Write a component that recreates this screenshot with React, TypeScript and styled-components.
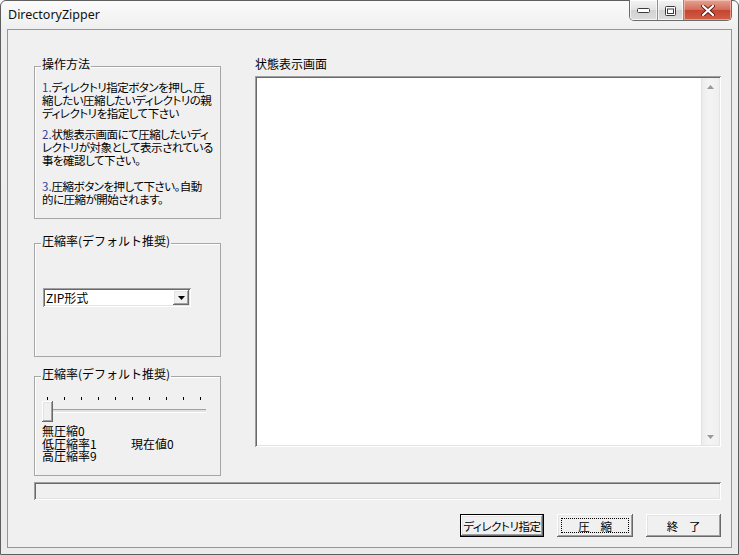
import React from 'react';
import styled, { createGlobalStyle, css } from 'styled-components';

const GlobalStyle = createGlobalStyle`
  html, body {
    margin: 0;
    padding: 0;
    background: #ffffff;
  }
  body {
    width: 739px;
    height: 555px;
    overflow: hidden;
  }
`;

const uiFont = `"Noto Sans CJK JP", "Noto Sans", sans-serif`;

const raised = css`
  background: #f0f0f0;
  box-shadow: inset -1px -1px #696969, inset 1px 1px #ffffff, inset -2px -2px #a0a0a0,
    inset 2px 2px #e3e3e3;
`;

const sunken = css`
  box-shadow: inset 1px 1px #a0a0a0, inset -1px -1px #ffffff, inset 2px 2px #696969,
    inset -2px -2px #e3e3e3;
`;

const steps = [
  {
    no: '1.',
    lines: ['ディレクトリ指定ボタンを押し、圧', '縮したい圧縮したいディレクトリの親', 'ディレクトリを指定して下さい'],
    gap: 0,
  },
  {
    no: '2.',
    lines: ['状態表示画面にて圧縮したいディ', 'レクトリが対象として表示されている', '事を確認して下さい。'],
    gap: 8,
  },
  {
    no: '3.',
    lines: ['圧縮ボタンを押して下さい。自動', '的に圧縮が開始されます。'],
    gap: 13,
  },
];

const ticks = Array.from({ length: 10 }, (_, i) => i);

const App: React.FC = () => {
  return (
    <>
      <GlobalStyle />
      <Window>
        <TitleBar>
          <Title>DirectoryZipper</Title>
          <Caption>
            <CapButton $w={28}>
              <svg width="14" height="6" viewBox="0 0 14 6">
                <rect x="0.5" y="0.5" width="12" height="4" rx="1" fill="#fff" stroke="#3c3c3c" />
              </svg>
            </CapButton>
            <CapButton $w={26}>
              <svg width="11" height="10" viewBox="0 0 11 10">
                <rect x="0.5" y="0.5" width="10" height="9" rx="1" fill="#fff" stroke="#3c3c3c" />
                <rect x="2.5" y="3" width="6" height="4.5" fill="none" stroke="#3c3c3c" />
              </svg>
            </CapButton>
            <CloseButton>
              <svg width="14" height="11" viewBox="0 0 14 11">
                <path
                  d="M2 1 L12 10 M12 1 L2 10"
                  stroke="#5a1f19"
                  strokeWidth="4"
                  strokeLinecap="round"
                />
                <path
                  d="M2 1 L12 10 M12 1 L2 10"
                  stroke="#ffffff"
                  strokeWidth="2.2"
                  strokeLinecap="round"
                />
              </svg>
            </CloseButton>
          </Caption>
        </TitleBar>
        <Client>
          <Main>
            <LeftColumn>
              <Group $h={153}>
                <Legend>操作方法</Legend>
                <Steps>
                  {steps.map(step => (
                    <Step key={step.no} $gap={step.gap}>
                      {step.lines.map((line, i) => (
                        <Line key={line}>
                          {i === 0 && <Num>{step.no}</Num>}
                          {line}
                        </Line>
                      ))}
                    </Step>
                  ))}
                </Steps>
              </Group>
              <Group $h={114} $gap={24}>
                <Legend>圧縮率(デフォルト推奨)</Legend>
                <ComboArea>
                  <Combo>
                    <ComboText>ZIP形式</ComboText>
                    <DropButton>
                      <svg width="7" height="4" viewBox="0 0 7 4">
                        <path d="M0 0 H7 L3.5 4 Z" fill="#000" />
                      </svg>
                    </DropButton>
                  </Combo>
                </ComboArea>
              </Group>
              <Group $h={100} $gap={19}>
                <Legend>圧縮率(デフォルト推奨)</Legend>
                <Slider>
                  <Ticks>
                    {ticks.map(t => (
                      <Tick key={t} />
                    ))}
                  </Ticks>
                  <Channel />
                  <Thumb />
                </Slider>
                <Values>
                  <ValueRow>
                    <ValueLabel>無圧縮0</ValueLabel>
                  </ValueRow>
                  <ValueRow>
                    <ValueLabel $w={89}>低圧縮率1</ValueLabel>
                    <ValueLabel>現在値0</ValueLabel>
                  </ValueRow>
                  <ValueRow>
                    <ValueLabel>高圧縮率9</ValueLabel>
                  </ValueRow>
                </Values>
              </Group>
            </LeftColumn>
            <RightColumn>
              <FieldLabel>状態表示画面</FieldLabel>
              <StatusBox>
                <StatusArea />
                <ScrollBar>
                  <ScrollArrow>
                    <svg width="7" height="4" viewBox="0 0 7 4">
                      <path d="M3.5 0 L7 4 H0 Z" fill="#9a9a9a" />
                    </svg>
                  </ScrollArrow>
                  <ScrollArrow>
                    <svg width="7" height="4" viewBox="0 0 7 4">
                      <path d="M0 0 H7 L3.5 4 Z" fill="#9a9a9a" />
                    </svg>
                  </ScrollArrow>
                </ScrollBar>
              </StatusBox>
            </RightColumn>
          </Main>
          <Progress />
          <ButtonRow>
            <PushButton $w={84} $default>
              ディレクトリ指定
            </PushButton>
            <PushButton $w={76}>
              <Focus>圧　縮</Focus>
            </PushButton>
            <PushButton $w={75}>終　了</PushButton>
          </ButtonRow>
        </Client>
      </Window>
    </>
  );
};

export default App;

const Window = styled.div`
  width: 739px;
  height: 555px;
  box-sizing: border-box;
  border: 1px solid #5e5e5e;
  border-radius: 6px 6px 0 0;
  background: linear-gradient(#fbfbfb, #eeeeee 30px, #ebebeb);
  display: flex;
  flex-direction: column;
  font-family: ${uiFont};
  color: #000;
`;

const TitleBar = styled.div`
  height: 28px;
  display: flex;
  justify-content: space-between;
  align-items: flex-start;
  padding-left: 7px;
`;

const Title = styled.div`
  margin-top: 6px;
  font-family: 'Noto Sans', sans-serif;
  font-size: 12.5px;
  line-height: 16px;
  color: #111;
`;

const Caption = styled.div`
  display: flex;
  margin-top: -1px;
  margin-right: 6px;
  height: 20px;
  border: 1px solid #6a6a6a;
  border-top: none;
  border-radius: 0 0 5px 5px;
  overflow: hidden;
`;

const CapButton = styled.div<{ $w: number }>`
  width: ${p => p.$w}px;
  height: 100%;
  display: flex;
  align-items: center;
  justify-content: center;
  padding-top: 2px;
  box-sizing: border-box;
  background: linear-gradient(#f4f4f4, #e2e2e2 50%, #d2d2d2 51%, #dcdcdc);
  border-right: 1px solid #8c8c8c;
  box-shadow: inset 0 0 0 1px rgba(255, 255, 255, 0.7);
`;

const CloseButton = styled.div`
  width: 47px;
  height: 100%;
  display: flex;
  align-items: center;
  justify-content: center;
  background: linear-gradient(#e4a393, #d46a58 50%, #c54530 51%, #d35e45);
  box-shadow: inset 0 0 0 1px rgba(255, 220, 210, 0.5);
`;

const Client = styled.div`
  flex: 1;
  margin: 0 6px 6px;
  border: 1px solid #969696;
  background: #f0f0f0;
  padding: 27px 10px 0 26px;
  display: flex;
  flex-direction: column;
`;

const Main = styled.div`
  display: grid;
  grid-template-columns: 187px 1fr;
  column-gap: 34px;
  align-items: start;
`;

const LeftColumn = styled.div`
  display: flex;
  flex-direction: column;
  padding-top: 9px;
`;

const Group = styled.div<{ $h: number; $gap?: number }>`
  position: relative;
  box-sizing: border-box;
  height: ${p => p.$h}px;
  margin-top: ${p => p.$gap ?? 0}px;
  border: 1px solid #a6a6a6;
  box-shadow: inset 1px 1px #ffffff;
`;

const Legend = styled.div`
  position: absolute;
  top: -10px;
  left: 6px;
  padding: 0 1px;
  background: #f0f0f0;
  font-size: 12px;
  line-height: 14px;
  white-space: nowrap;
`;

const Steps = styled.div`
  padding: 14px 0 0 7px;
`;

const Step = styled.div<{ $gap: number }>`
  margin-top: ${p => p.$gap}px;
`;

const Line = styled.div`
  font-size: 11.5px;
  line-height: 13px;
  white-space: nowrap;
  font-feature-settings: 'palt';
  letter-spacing: -0.5px;
`;

const Num = styled.span`
  color: #2f3c95;
  letter-spacing: 0;
`;

const ComboArea = styled.div`
  padding: 44px 0 0 8px;
`;

const Combo = styled.div`
  width: 148px;
  height: 19px;
  box-sizing: border-box;
  background: #ffffff;
  ${sunken};
  display: flex;
  align-items: center;
  justify-content: space-between;
  padding: 2px;
`;

const ComboText = styled.span`
  font-size: 12px;
  line-height: 15px;
  padding-left: 1px;
`;

const DropButton = styled.div`
  width: 16px;
  height: 15px;
  ${raised};
  display: flex;
  align-items: center;
  justify-content: center;
`;

const Slider = styled.div`
  position: relative;
  margin: 20px 0 0 7px;
  width: 165px;
  height: 26px;
`;

const Ticks = styled.div`
  display: flex;
  justify-content: space-between;
  padding: 0 6px 0 5px;
`;

const Tick = styled.span`
  width: 1px;
  height: 3px;
  background: #000;
`;

const Channel = styled.div`
  position: absolute;
  top: 12px;
  left: 1px;
  right: 1px;
  height: 2px;
  border-top: 1px solid #a0a0a0;
  border-bottom: 1px solid #ffffff;
  background: #e3e3e3;
`;

const Thumb = styled.div`
  position: absolute;
  top: 4px;
  left: 0;
  width: 11px;
  height: 21px;
  ${raised};
`;

const Values = styled.div`
  margin: 2px 0 0 7px;
`;

const ValueRow = styled.div`
  display: flex;
`;

const ValueLabel = styled.span<{ $w?: number }>`
  width: ${p => (p.$w ? `${p.$w}px` : 'auto')};
  font-size: 12px;
  line-height: 12.5px;
  white-space: nowrap;
  font-feature-settings: 'palt';
`;

const RightColumn = styled.div`
  display: flex;
  flex-direction: column;
`;

const FieldLabel = styled.div`
  font-size: 12px;
  line-height: 14px;
  margin-bottom: 5px;
`;

const StatusBox = styled.div`
  height: 371px;
  box-sizing: border-box;
  background: #ffffff;
  ${sunken};
  padding: 2px;
  display: flex;
`;

const StatusArea = styled.div`
  flex: 1;
`;

const ScrollBar = styled.div`
  width: 17px;
  background: linear-gradient(90deg, #ececec, #f4f4f4 40%, #efefef);
  border-left: 1px solid #e2e2e2;
  display: flex;
  flex-direction: column;
  justify-content: space-between;
`;

const ScrollArrow = styled.div`
  height: 17px;
  display: flex;
  align-items: center;
  justify-content: center;
`;

const Progress = styled.div`
  margin-top: 6px;
  height: 18px;
  ${sunken};
`;

const ButtonRow = styled.div`
  margin-top: 14px;
  display: flex;
  justify-content: flex-end;
  gap: 13px;
`;

const PushButton = styled.div<{ $w: number; $default?: boolean }>`
  width: ${p => p.$w}px;
  height: 23px;
  box-sizing: border-box;
  display: flex;
  align-items: center;
  justify-content: center;
  font-size: 11.5px;
  line-height: 14px;
  letter-spacing: -0.4px;
  white-space: nowrap;
  font-feature-settings: 'palt';
  ${raised};
  ${p =>
    p.$default &&
    css`
      border: 1px solid #000;
    `}
`;

const Focus = styled.span`
  align-self: stretch;
  flex: 1;
  margin: 4px;
  border: 1px dotted #000;
  display: flex;
  align-items: center;
  justify-content: center;
`;
